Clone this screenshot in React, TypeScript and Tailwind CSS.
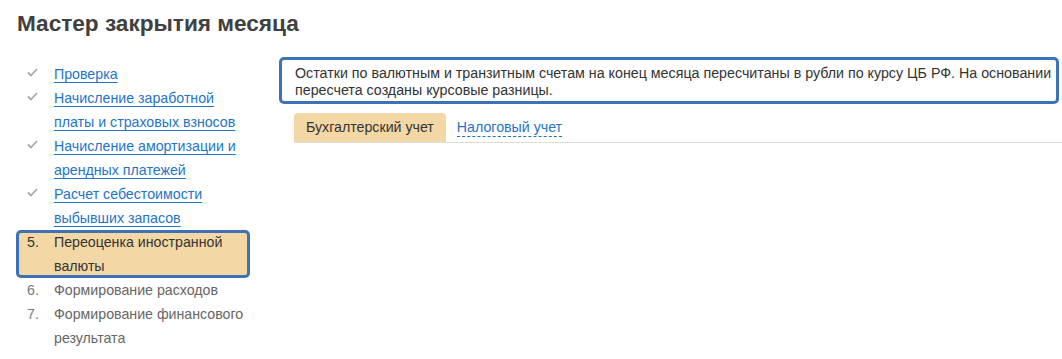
import React from 'react'

type Step = {
    lines: string[]
    done?: boolean
    num?: string
    active?: boolean
}

const steps: Step[] = [
    { lines: ['Проверка'], done: true },
    { lines: ['Начисление заработной', 'платы и страховых взносов'], done: true },
    { lines: ['Начисление амортизации и', 'арендных платежей'], done: true },
    { lines: ['Расчет себестоимости', 'выбывших запасов'], done: true },
    { lines: ['Переоценка иностранной', 'валюты'], num: '5.', active: true },
    { lines: ['Формирование расходов'], num: '6.' },
    { lines: ['Формирование финансового', 'результата'], num: '7.' },
]

function Check() {
    return (
        <svg width="11" height="9" viewBox="0 0 11 9" className="mt-[6px]">
            <path d="M1 4.5 L4 7.5 L10 1" fill="none" stroke="#a8a8a8" strokeWidth="1.8" />
        </svg>
    )
}

export default function App() {
    return (
        <div
            className="w-[1062px] h-[359px] bg-white overflow-hidden text-[#333]"
            style={{ fontFamily: '"Liberation Sans", Arial, sans-serif' }}
        >
            {/* Title */}
            <h1 className="pl-[17px] pt-[10px] text-[22.6px] leading-[28px] font-bold text-[#404040]">
                Мастер закрытия месяца
            </h1>

            <div className="flex pl-[16px] pt-[19px]">
                {/* Steps */}
                <div className="w-[234px] shrink-0 pt-[5px]">
                    {steps.map((s, i) => (
                        <div
                            key={i}
                            className={
                                s.active
                                    ? 'flex pl-[11px] bg-[#f3d7a5] rounded-[5px] ring-[3px] ring-inset ring-[#3e72b6]'
                                    : 'flex pl-[11px]'
                            }
                        >
                            <div className="w-[27px] shrink-0 text-[14.2px] leading-[24px] text-[#777]">
                                {s.done ? <Check /> : <span className={s.active ? 'text-[#333]' : ''}>{s.num}</span>}
                            </div>
                            <div className="text-[14.2px] leading-[24px]">
                                {s.lines.map((l, j) => (
                                    <div key={j}>
                                        {s.done ? (
                                            <a href="#" className="text-[#1f74c6] underline underline-offset-[3px] decoration-1">
                                                {l}
                                            </a>
                                        ) : (
                                            <span className={s.active ? 'text-[#333]' : 'text-[#666]'}>{l}</span>
                                        )}
                                    </div>
                                ))}
                            </div>
                        </div>
                    ))}
                </div>

                {/* Right panel */}
                <div className="ml-[29px] flex-1 mr-[3px]">
                    <div className="border-[3px] border-[#3e72b6] rounded-[5px] pl-[13px] pr-0 pt-[5px] pb-[2px] text-[14.25px] leading-[17px] text-[#333]">
                        Остатки по валютным и транзитным счетам на конец месяца пересчитаны в рубли по курсу ЦБ РФ. На основании пересчета созданы курсовые разницы.
                    </div>

                    <div className="flex items-end mt-[9px] ml-[15px] -mr-[3px] border-b border-[#dddddd]">
                        <div className="bg-[#f3d7a5] rounded-t-[4px] px-[12px] h-[29px] leading-[29px] text-[14.2px] text-[#333]">
                            Бухгалтерский учет
                        </div>
                        <a
                            href="#"
                            className="ml-[11px] mb-[5px] text-[14.2px] leading-[18px] text-[#1f74c6] border-b border-dashed border-[#1f74c6]"
                        >
                            Налоговый учет
                        </a>
                    </div>
                </div>
            </div>
        </div>
    )
}
